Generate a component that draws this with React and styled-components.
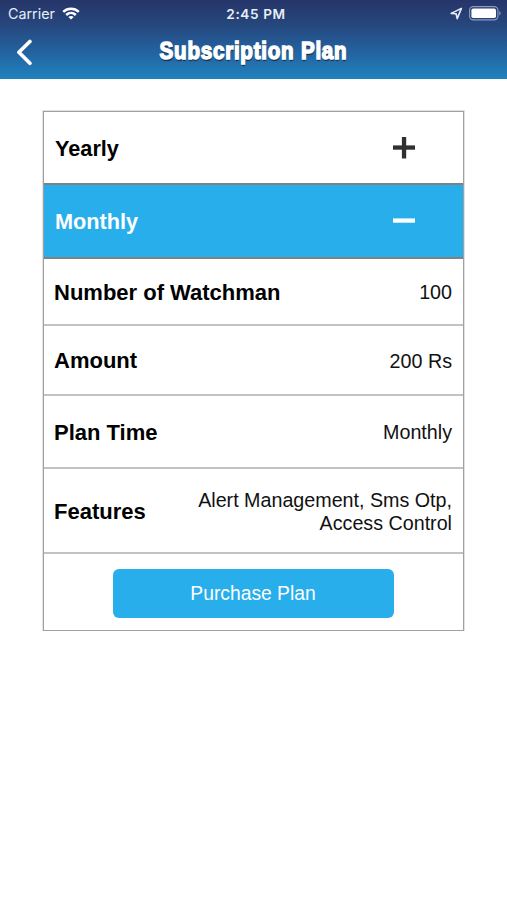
import React, { useState } from "react";
import styled, { createGlobalStyle, ThemeProvider } from "styled-components";

const theme = {
    accent: "#29aeec",
    border: "#a0a0a0",
    divider: "#c2c2c2",
    headerDivider: "#7b8388",
};

const plans = [
    { name: "Yearly", rows: [] },
    {
        name: "Monthly",
        rows: [
            { label: "Number of Watchman", value: "100", height: 67 },
            { label: "Amount", value: "200 Rs", height: 70 },
            { label: "Plan Time", value: "Monthly", height: 73 },
            { label: "Features", value: "Alert Management, Sms Otp, Access Control", height: 85 },
        ],
    },
];

const App = () => {
    // Name of the plan that is currently expanded
    const [openPlan, setOpenPlan] = useState("Monthly");

    return (
        <ThemeProvider theme={theme}>
            <GlobalStyle />
            <Header>
                <StatusBar>
                    <StatusLeft>
                        <Carrier>Carrier</Carrier>
                        <WifiIcon />
                    </StatusLeft>
                    <Clock>2:45 PM</Clock>
                    <StatusRight>
                        <LocationIcon />
                        <BatteryIcon />
                    </StatusRight>
                </StatusBar>
                <NavBar>
                    <BackButton aria-label="Back">
                        <BackIcon />
                    </BackButton>
                    <Title>Subscription Plan</Title>
                </NavBar>
            </Header>
            <PlanCard>
                {plans.map(({ name, rows }) => {
                    const active = openPlan === name;
                    return (
                        <React.Fragment key={name}>
                            <PlanHeader $active={active} onClick={() => setOpenPlan(active ? null : name)}>
                                <PlanName $active={active}>{name}</PlanName>
                                <ToggleIcon open={active} />
                            </PlanHeader>
                            {active && rows.map((row) => (
                                <DetailRow key={row.label} $height={row.height}>
                                    <Label>{row.label}</Label>
                                    <Value>{row.value}</Value>
                                </DetailRow>
                            ))}
                        </React.Fragment>
                    );
                })}
                <Actions>
                    <PurchaseButton>Purchase Plan</PurchaseButton>
                </Actions>
            </PlanCard>
        </ThemeProvider>
    );
};

const WifiIcon = () => (
    <svg width="18" height="13" viewBox="0 0 18 13" fill="none" stroke="#fff" strokeWidth="2.5">
        <path d="M1.2 4.8C5.6.6 12.4.6 16.8 4.8" />
        <path d="M4.2 8C7 5.4 11 5.4 13.8 8" />
        <path d="M9 12.6 6.3 9.9C7.8 8.6 10.2 8.6 11.7 9.9Z" fill="#fff" stroke="none" />
    </svg>
);

const LocationIcon = () => (
    <svg width="13" height="13" viewBox="0 0 13 13" fill="none" stroke="#e8ecf6" strokeWidth="1.6" strokeLinejoin="round">
        <path d="M11.4 1.4 1.2 6.4 6.1 6.8 7.2 11.6Z" />
    </svg>
);

const BatteryIcon = () => (
    <svg width="33" height="15" viewBox="0 0 33 15">
        <rect x=".6" y=".6" width="28.3" height="13.3" rx="3.6" fill="none" stroke="#8f9bc0" strokeWidth="1.1" />
        <rect x="2.4" y="2.4" width="24.6" height="9.7" rx="1.8" fill="#fff" />
        <path d="M30.3 5v4.6c1.8-.8 1.8-3.8 0-4.6Z" fill="#8f9bc0" />
    </svg>
);

const BackIcon = () => (
    <svg width="17" height="27" viewBox="0 0 17 27" fill="none" stroke="#fff" strokeWidth="3.7" strokeLinecap="round" strokeLinejoin="round">
        <path d="M13.9 2.5 2.9 13.3 13.9 24.3" />
    </svg>
);

const ToggleIcon = ({ open }) => (
    <svg width="22" height="22" viewBox="0 0 22 22" fill={open ? "#fff" : "#303030"}>
        <rect x="0" y="8.4" width="22" height="4.3" />
        {!open && <rect x="8.9" y="0" width="4.3" height="21.5" />}
    </svg>
);

const GlobalStyle = createGlobalStyle`
    * {
        box-sizing: border-box;
    }

    body {
        margin: 0;
        background: #fff;
        color: #000;
        font-family: "Liberation Sans", Arial, sans-serif;
    }

    svg {
        display: block;
        flex-shrink: 0;
    }

    button {
        border: 0;
        padding: 0;
        font-family: inherit;
        cursor: pointer;
    }
`;

const Header = styled.header`
    height: 79px;
    background: linear-gradient(#263569 0%, #26467c 30%, #2362a0 65%, #2082bd 100%);
`;

const StatusBar = styled.div`
    display: grid;
    grid-template-columns: 1fr auto 1fr;
    align-items: center;
    height: 27px;
    padding: 0 5px 0 8px;
    color: #e9edf7;
    font-family: Inter, sans-serif;
`;

const StatusLeft = styled.div`
    display: flex;
    align-items: center;
    gap: 7px;
`;

const Carrier = styled.span`
    font-size: 14.3px;
`;

const Clock = styled.span`
    margin-left: 2px;
    font-size: 13.6px;
    font-weight: 600;
    letter-spacing: 0.6px;
`;

const StatusRight = styled.div`
    display: flex;
    align-items: center;
    justify-content: flex-end;
    gap: 6px;
`;

const NavBar = styled.div`
    display: grid;
    grid-template-columns: 60px 1fr 60px;
    align-items: center;
    height: 50px;
`;

const BackButton = styled.button`
    padding-left: 16px;
    background: none;
`;

const Title = styled.h1`
    margin: 0;
    padding-bottom: 2px;
    color: #fff;
    font-size: 24.5px;
    font-weight: 700;
    line-height: 46px;
    letter-spacing: 0.9px;
    text-align: center;
    white-space: nowrap;
    /* condensed heavy look */
    transform: scaleX(0.84);
    -webkit-text-stroke: 1.5px #fff;
    text-shadow: 0.5px 1.5px 1px #1b2e4a;
`;

const PlanCard = styled.main`
    width: 421px;
    margin: 32px 0 0 43px;
    border: 1px solid ${({ theme }) => theme.border};
    outline: 0.5px solid #e2e2e2;
`;

const PlanHeader = styled.div`
    display: flex;
    align-items: center;
    justify-content: space-between;
    height: ${({ $active }) => ($active ? 74 : 73)}px;
    padding: 0 48px 0 11px;
    border-bottom: 2px solid ${({ theme }) => theme.headerDivider};
    background: ${({ $active, theme }) => ($active ? theme.accent : "#fff")};
    color: ${({ $active }) => ($active ? "#fff" : "#000")};
    cursor: pointer;
`;

const PlanName = styled.span`
    padding-top: ${({ $active }) => ($active ? 1 : 3)}px;
    font-size: 21.7px;
    font-weight: 700;
`;

const DetailRow = styled.div`
    display: flex;
    align-items: center;
    justify-content: space-between;
    height: ${({ $height }) => $height}px;
    padding: 2px 11px 0 10px;
    border-bottom: 2px solid ${({ theme }) => theme.divider};
`;

const Label = styled.span`
    font-size: 22px;
    font-weight: 700;
    white-space: nowrap;
`;

const Value = styled.span`
    max-width: 260px;
    color: #111;
    font-size: 19.7px;
    line-height: 22.5px;
    text-align: right;
`;

const Actions = styled.div`
    display: flex;
    justify-content: center;
    padding: 15px 1px 12px 0;
`;

const PurchaseButton = styled.button`
    width: 281px;
    height: 49px;
    padding-top: 1px;
    border-radius: 6px;
    background: ${({ theme }) => theme.accent};
    color: #fff;
    font-size: 19.3px;
`;

export default App;
